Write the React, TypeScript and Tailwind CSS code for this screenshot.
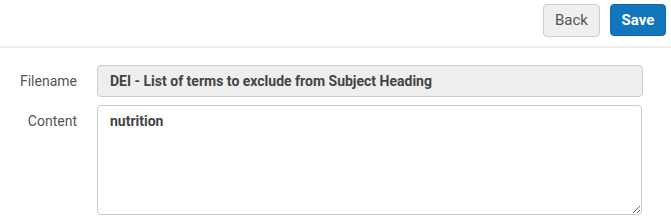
import React from "react";

export default function App() {
  return (
    <div className="w-[671px] h-[224px] bg-white overflow-hidden" style={{ fontFamily: "Roboto, 'Liberation Sans', sans-serif" }}>
      <div className="flex justify-end items-start gap-[10px] pt-[4px] pr-[5px] h-[48px] border-b-2 border-[#ececec]">
        <button className="h-[33px] w-[57px] rounded-[4px] border border-[#cfcfcf] bg-[#efefef] text-[#555] text-[15px]">Back</button>
        <button className="h-[32px] w-[56px] rounded-[4px] bg-[#1276bd] border border-[#0e67a8] text-white text-[15px] font-bold">Save</button>
      </div>
      <div className="pt-[17px] flex flex-col gap-[8px]">
        <div className="flex items-center">
          <label className="w-[77px] text-right text-[14px] text-[#555]">Filename</label>
          <div className="ml-[20px] w-[546px] h-[32px] rounded-[4px] border border-[#cccccc] bg-[#eeeeee] px-[12px] flex items-center text-[14px] font-bold text-[#444]">
            DEI - List of terms to exclude from Subject Heading
          </div>
        </div>
        <div className="flex items-start">
          <label className="w-[77px] text-right text-[14px] text-[#555] pt-[6px]">Content</label>
          <textarea
            className="ml-[20px] w-[545px] h-[110px] rounded-[4px] border border-[#cccccc] bg-white px-[12px] pt-[5px] pb-[7px] text-[14px] font-bold text-[#444] outline-none"
            defaultValue="nutrition"
            style={{ fontFamily: "Roboto, 'Liberation Sans', sans-serif" }}
          />
        </div>
      </div>
    </div>
  );
}
